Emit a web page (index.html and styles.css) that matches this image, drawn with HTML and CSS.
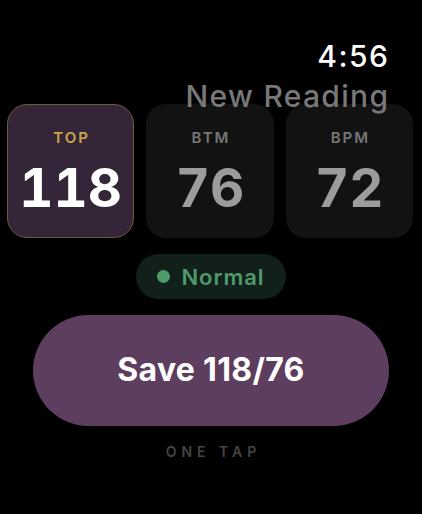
FILE: index.html
```html
<!DOCTYPE html>
<html>
<head>
<meta charset="utf-8">
<link rel="stylesheet" href="styles.css">
</head>
<body>
<div class="screen">
  <header class="header">
    <div class="time">4:56</div>
    <div class="title">New Reading</div>
  </header>
  <section class="cards">
    <div class="card card-active">
      <div class="label label-active">TOP</div>
      <div class="value value-active">118</div>
    </div>
    <div class="card">
      <div class="label">BTM</div>
      <div class="value">76</div>
    </div>
    <div class="card">
      <div class="label">BPM</div>
      <div class="value">72</div>
    </div>
  </section>
  <div class="status-row">
    <div class="status"><span class="dot"></span><span class="status-text">Normal</span></div>
  </div>
  <div class="save-row">
    <div class="save">Save 118/76</div>
  </div>
  <div class="hint">ONE TAP</div>
</div>
</body>
</html>
```

FILE: styles.css
```css
html, body {
  margin: 0;
  padding: 0;
  background: #000;
}
body {
  font-family: Inter, "Noto Sans", "Liberation Sans", sans-serif;
  color: #fff;
  width: 422px;
  height: 514px;
  overflow: hidden;
}
.screen {
  display: flex;
  flex-direction: column;
}
.header {
  box-sizing: border-box;
  height: 104px;
  padding: 41px 34px 0 0;
  display: flex;
  flex-direction: column;
  align-items: flex-end;
}
.time {
  font-size: 30px;
  line-height: 30px;
  font-weight: 500;
  letter-spacing: 1.5px;
  margin-right: -1.5px;
  color: #fff;
}
.title {
  position: relative;
  z-index: 1;
  margin-top: 10px;
  font-size: 30px;
  line-height: 30px;
  font-weight: 500;
  letter-spacing: 1.3px;
  margin-right: -1.3px;
  color: #787878;
}
.cards {
  display: grid;
  grid-template-columns: 1fr 1fr 1fr;
  gap: 12px;
  padding: 0 9px 0 7px;
}
.card {
  box-sizing: border-box;
  height: 134px;
  border-radius: 20px;
  background: #121212;
  display: flex;
  flex-direction: column;
  align-items: center;
  padding-top: 25px;
}
.card-active {
  background: #352539;
  border: 1.5px solid #6e5a36;
  padding-top: 23.5px;
}
.label {
  font-size: 15px;
  line-height: 18px;
  font-weight: 600;
  letter-spacing: 2px;
  margin-right: -2px;
  color: #777;
}
.label-active {
  color: #c9a54c;
}
.value {
  margin-top: 13px;
  font-size: 53px;
  line-height: 56px;
  font-weight: 700;
  font-variant-numeric: tabular-nums;
  color: #9c9c9c;
}
.value-active {
  color: #fff;
}
.status-row {
  display: flex;
  justify-content: center;
  margin-top: 16px;
}
.status {
  box-sizing: border-box;
  width: 150px;
  height: 45px;
  border-radius: 23px;
  background: #11201a;
  display: flex;
  align-items: center;
  justify-content: center;
  gap: 11px;
}
.dot {
  width: 13px;
  height: 13px;
  border-radius: 50%;
  background: #4f9a6a;
}
.status-text {
  font-size: 22px;
  font-weight: 600;
  letter-spacing: 1px;
  color: #4f9a6a;
}
.save-row {
  padding: 0 33px;
  margin-top: 16px;
}
.save {
  height: 111px;
  border-radius: 56px;
  background: #5e3e5f;
  display: flex;
  align-items: center;
  justify-content: center;
  padding-bottom: 2px;
  box-sizing: border-box;
  font-size: 32px;
  font-weight: 700;
  letter-spacing: 0.3px;
  color: #fff;
}
.hint {
  margin-top: 18px;
  text-align: center;
  font-size: 14px;
  line-height: 16px;
  font-weight: 600;
  letter-spacing: 5px;
  margin-right: -5px;
  color: #444;
}
```
